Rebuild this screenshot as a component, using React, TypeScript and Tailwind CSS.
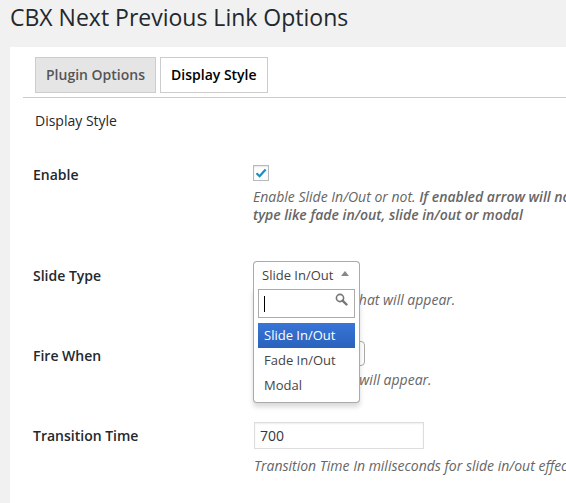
export default function App() {
  return (
    <div className="h-[503px] w-[566px] overflow-hidden bg-[#f1f1f1] pl-[10px] font-['Open_Sans',sans-serif] text-[14px] text-[#23282d]">
      <h1 className="h-[47px] whitespace-nowrap pt-[2px] text-[23px] font-normal leading-[30px] text-[#23282d]">
        CBX Next Previous Link Options
      </h1>
      <div className="h-[456px] w-[600px] bg-white pl-[13px] pt-[10px]">
        {/* tabs */}
        <div className="flex gap-[4px] border-b border-[#ccc] pb-[4px] pl-[12px]">
          <div className="h-[36px] border border-[#ccc] bg-[#e5e5e5] px-[10px] text-[14px] font-semibold leading-[34px] text-[#555]">
            Plugin Options
          </div>
          <div className="h-[36px] border border-[#ccc] bg-white px-[10px] text-[14px] font-semibold leading-[34px] text-black">
            Display Style
          </div>
        </div>
        <div className="mt-[14px] pl-[12px] text-[14px] leading-[18px]">Display Style</div>

        <div className="pl-[10px]">
          {/* Enable */}
          <div className="mt-[35px] flex">
            <div className="w-[220px] shrink-0 pt-[1px] font-semibold leading-[18px]">Enable</div>
            <div>
              <div className="flex h-[16px] w-[16px] items-center justify-center border border-[#b4b9be] bg-white shadow-[inset_0_1px_2px_rgba(0,0,0,0.1)]">
                <svg width="14" height="14" viewBox="0 0 14 14">
                  <path d="M2.5 7.2 L5.6 10.2 L11.6 3.4" fill="none" stroke="#1e8cbe" strokeWidth="2.2" />
                </svg>
              </div>
              <p className="mt-[7px] whitespace-nowrap text-[14px] italic leading-[18px] text-[#666]">
                Enable Slide In/Out or not. <span className="font-semibold">If enabled arrow will not show for default slide</span>
                <br />
                <span className="font-semibold">type like fade in/out, slide in/out or modal</span>
              </p>
            </div>
          </div>

          {/* Slide Type */}
          <div className="mt-[37px] flex">
            <div className="w-[220px] shrink-0 pt-[6px] font-semibold leading-[18px]">Slide Type</div>
            <div className="relative">
              <div className="relative z-10 flex h-[26px] w-[107px] items-center rounded-t-[4px] border border-b-0 border-[#aaa] bg-white pl-[8px] text-[13px] text-[#444]">
                <span className="leading-[18px]">Slide In/Out</span>
                <span className="absolute right-[10px] top-[9px] h-0 w-0 border-x-[4px] border-b-[5px] border-x-transparent border-b-[#888]" />
                {/* dropdown */}
                <div className="absolute left-[-1px] top-[25px] w-[107px] rounded-b-[4px] border border-t-0 border-[#aaa] bg-white px-[4px] pb-[4px] pt-[2px] shadow-[0_4px_5px_rgba(0,0,0,0.15)]">
                  <div className="relative h-[29px] w-[97px] border border-[#aaa] bg-white">
                    <span className="absolute left-[5px] top-[6px] h-[16px] w-[1px] bg-black" />
                    <svg className="absolute right-[6px] top-[3px]" width="13" height="13" viewBox="0 0 13 13">
                      <circle cx="5" cy="5" r="3.6" fill="none" stroke="#777" strokeWidth="1.6" />
                      <path d="M7.6 7.6 L11.5 11.5" stroke="#777" strokeWidth="2.4" strokeLinecap="round" />
                    </svg>
                  </div>
                  <div className="mt-[5px] w-[97px]">
                    <div className="h-[25px] bg-gradient-to-b from-[#3875d7] to-[#2a62bc] pl-[6px] leading-[25px] text-white">Slide In/Out</div>
                    <div className="h-[25px] pl-[6px] leading-[25px] text-[#444]">Fade In/Out</div>
                    <div className="h-[25px] pl-[6px] leading-[25px] text-[#444]">Modal</div>
                  </div>
                </div>
              </div>
              <p className="mt-[4px] whitespace-nowrap pl-[1px] text-[14px] italic leading-[18px] text-[#666]">
                Select the slides that will appear.
              </p>
            </div>
          </div>

          {/* Fire When */}
          <div className="mt-[32px] flex">
            <div className="w-[220px] shrink-0 pt-[6px] font-semibold leading-[18px]">Fire When</div>
            <div>
              <div className="flex h-[25px] w-[112px] items-center rounded-[4px] border border-[#aaa] bg-white pl-[8px] text-[13px] text-[#444]">
                <span className="leading-[18px]">On Scroll</span>
              </div>
              <p className="mt-[5px] whitespace-nowrap pl-[1px] text-[14px] italic leading-[18px] text-[#666]">
                When the sliders will appear.
              </p>
            </div>
          </div>

          {/* Transition Time */}
          <div className="mt-[33px] flex">
            <div className="w-[220px] shrink-0 pt-[5px] font-semibold leading-[18px]">Transition Time</div>
            <div className="pl-[1px]">
              <div className="flex h-[27px] w-[170px] items-center border border-[#ddd] bg-white pl-[5px] text-[#32373c] shadow-[inset_0_1px_2px_rgba(0,0,0,0.07)]">
                <span className="leading-[18px]">700</span>
              </div>
              <p className="mt-[8px] whitespace-nowrap text-[14px] italic leading-[18px] text-[#666]">
                Transition Time In miliseconds for slide in/out effect
              </p>
            </div>
          </div>
        </div>
      </div>
    </div>
  );
}
